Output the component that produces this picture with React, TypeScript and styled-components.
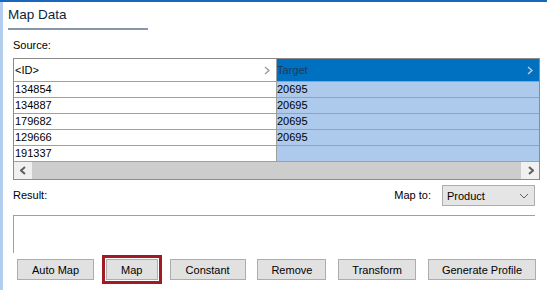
import React from "react";
import styled, { createGlobalStyle } from "styled-components";

const Global = createGlobalStyle`
  html, body { margin: 0; padding: 0; background: #ffffff; }
  body { font-family: "Liberation Sans", Arial, sans-serif; font-size: 11px; color: #000; }
  * { box-sizing: border-box; }
`;

const Frame = styled.div`
  width: 547px;
  height: 290px;
  border-top: 2px solid #1767bf;
  background: #fff;
  overflow: hidden;
`;

const Body = styled.div`
  height: 288px;
  border-left: 3px solid #b3cdee;
  display: flex;
  flex-direction: column;
`;

const Title = styled.div`
  margin-left: 5px;
  width: 140px;
  height: 28px;
  line-height: 26px;
  font-size: 13.5px;
  color: #0e1f3b;
  border-bottom: 2px solid #8796a8;
`;

const Section = styled.div`
  margin-left: 10px;
  display: flex;
  flex-direction: column;
`;

const Label = styled.div`
  font-size: 11px;
  line-height: 13px;
  height: 13px;
  margin-top: ${(p: { $top?: number }) => p.$top ?? 0}px;
`;

const Grid = styled.div`
  margin-top: 6px;
  width: 527px;
  border: 1px solid #8c8c8c;
  display: flex;
  flex-direction: column;
`;

const Row = styled.div<{ $header?: boolean }>`
  display: grid;
  grid-template-columns: 263px 1fr;
  height: ${(p) => (p.$header ? 23 : 16)}px;
`;

const Cell = styled.div<{ $right?: boolean; $header?: boolean }>`
  display: flex;
  align-items: center;
  justify-content: space-between;
  padding-left: ${(p) => (p.$right ? 0 : 1)}px;
  padding-right: 6px;
  font-size: 11px;
  line-height: 15px;
  border-bottom: 1px solid #a0a0a0;
  border-right: ${(p) => (p.$right ? "none" : "1px solid #a0a0a0")};
  background: ${(p) =>
    p.$right ? (p.$header ? "#0070c0" : "#adc9ec") : "#ffffff"};
  color: ${(p) => (p.$right && p.$header ? "#1f3a5c" : "#000")};
`;

const HScroll = styled.div`
  height: 17px;
  display: flex;
  background: #f0f0f0;
`;

const ScrollBtn = styled.div`
  width: 17px;
  height: 17px;
  display: flex;
  align-items: center;
  justify-content: center;
`;

const Thumb = styled.div`
  flex: 1;
  margin: 0 1px;
  background: #cdcdcd;
`;

const ResultRow = styled.div`
  margin-top: 5px;
  width: 522px;
  height: 21px;
  display: flex;
  align-items: center;
`;

const Spacer = styled.div`
  flex: 1;
`;

const MapToLabel = styled.div`
  font-size: 11px;
  line-height: 13px;
  margin-right: 11px;
`;

const Select = styled.div`
  width: 93px;
  height: 21px;
  border: 1px solid #adadad;
  background: #e5e5e5;
  display: flex;
  align-items: center;
  justify-content: space-between;
  padding: 0 5px 0 4px;
  font-size: 11px;
`;

const ResultBox = styled.div`
  margin-top: 9px;
  width: 522px;
  height: 38px;
  border-top: 1px solid #a0a0a0;
  border-left: 1px solid #a0a0a0;
`;

const Buttons = styled.div`
  margin-top: 6px;
  margin-left: 4px;
  width: 519px;
  display: flex;
  justify-content: space-between;
`;

const Button = styled.div<{ $w: number; $focus?: boolean }>`
  width: ${(p) => p.$w}px;
  height: 21px;
  border: 1px solid #adadad;
  background: #e1e1e1;
  display: flex;
  align-items: center;
  justify-content: center;
  font-size: 11px;
  color: #000;
  outline: ${(p) => (p.$focus ? "3px solid #a01b24" : "none")};
  outline-offset: 1px;
`;

const Chevron = ({ color, dir = "right", w = 4, h = 7, sw = 1.4 }: { color: string; dir?: "right" | "left"; w?: number; h?: number; sw?: number }) => (
  <svg width={w + 2} height={h + 2} viewBox={`0 0 ${w + 2} ${h + 2}`}>
    {dir === "right" ? (
      <polyline points={`1,1 ${w + 1},${h / 2 + 1} 1,${h + 1}`} fill="none" stroke={color} strokeWidth={sw} />
    ) : (
      <polyline points={`${w + 1},1 1,${h / 2 + 1} ${w + 1},${h + 1}`} fill="none" stroke={color} strokeWidth={sw} />
    )}
  </svg>
);

const DownChevron = () => (
  <svg width="10" height="6" viewBox="0 0 10 6">
    <polyline points="1,1 5,5 9,1" fill="none" stroke="#606060" strokeWidth="1" />
  </svg>
);

const rows = [
  ["134854", "20695"],
  ["134887", "20695"],
  ["179682", "20695"],
  ["129666", "20695"],
  ["191337", ""],
];

const buttons: [string, number, boolean?][] = [
  ["Auto Map", 77],
  ["Map", 52, true],
  ["Constant", 76],
  ["Remove", 69],
  ["Transform", 78],
  ["Generate Profile", 108],
];

export default function App() {
  return (
    <>
      <Global />
      <Frame>
        <Body>
          <Title>Map Data</Title>
          <Section>
            <Label $top={9}>Source:</Label>
            <Grid>
              <Row $header>
                <Cell $header>
                  <span>&lt;ID&gt;</span>
                  <Chevron color="#9a9a9a" />
                </Cell>
                <Cell $header $right>
                  <span>Target</span>
                  <Chevron color="#c8ccd4" />
                </Cell>
              </Row>
              {rows.map(([a, b]) => (
                <Row key={a}>
                  <Cell>{a}</Cell>
                  <Cell $right>{b}</Cell>
                </Row>
              ))}
              <HScroll>
                <ScrollBtn>
                  <Chevron color="#606060" dir="left" w={4} h={7} sw={2} />
                </ScrollBtn>
                <Thumb />
                <ScrollBtn>
                  <Chevron color="#606060" w={4} h={7} sw={2} />
                </ScrollBtn>
              </HScroll>
            </Grid>
            <ResultRow>
              <Label>Result:</Label>
              <Spacer />
              <MapToLabel>Map to:</MapToLabel>
              <Select>
                <span>Product</span>
                <DownChevron />
              </Select>
            </ResultRow>
            <ResultBox />
            <Buttons>
              {buttons.map(([t, w, f]) => (
                <Button key={t} $w={w} $focus={f}>
                  {t}
                </Button>
              ))}
            </Buttons>
          </Section>
        </Body>
      </Frame>
    </>
  );
}
